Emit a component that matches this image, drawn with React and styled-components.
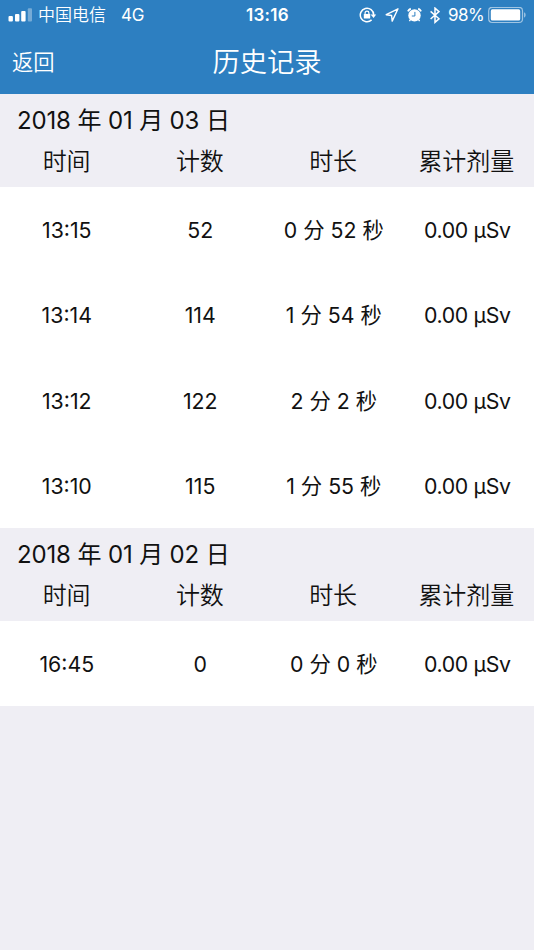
import React from "react";
import styled, { createGlobalStyle } from "styled-components";

const COLUMNS = ["时间", "计数", "时长", "累计剂量"];

const SECTIONS = [
  {
    date: "2018 年 01 月 03 日",
    records: [
      { time: "13:15", count: 52, duration: "0 分 52 秒", dose: "0.00 μSv" },
      { time: "13:14", count: 114, duration: "1 分 54 秒", dose: "0.00 μSv" },
      { time: "13:12", count: 122, duration: "2 分 2 秒", dose: "0.00 μSv" },
      { time: "13:10", count: 115, duration: "1 分 55 秒", dose: "0.00 μSv" },
    ],
  },
  {
    date: "2018 年 01 月 02 日",
    records: [
      { time: "16:45", count: 0, duration: "0 分 0 秒", dose: "0.00 μSv" },
    ],
  },
];

const SignalIcon = () => (
  <svg width="24" height="16" viewBox="0 0 24 16" fill="#fff">
    <rect x="0.5" y="9" width="4.4" height="5.4" rx="1" />
    <rect x="7" y="7" width="4.4" height="7.4" rx="1" />
    <rect x="13.2" y="4" width="4.4" height="10.4" rx="1" />
    <rect x="19.8" y="1.2" width="4.2" height="13.2" rx="1" opacity="0.35" />
  </svg>
);

const LockIcon = () => (
  <svg width="18" height="16" viewBox="0 0 18 16" fill="none" stroke="#fff">
    <path d="M12.6 12.9A6.7 6.7 0 1 1 14.7 8" strokeWidth="1.5" />
    <path d="M11.6 7.6h5.6l-2.6 3.4z" fill="#fff" stroke="none" />
    <rect x="4.8" y="7" width="6.4" height="4.6" rx="0.6" fill="#fff" stroke="none" />
    <path d="M6.1 7.3V6A1.9 1.9 0 0 1 9.9 6v1.3" strokeWidth="1.2" />
  </svg>
);

const LocationIcon = () => (
  <svg width="14" height="16" viewBox="0 0 14 16" fill="none" stroke="#fff">
    <path
      d="M13 1.8 1.2 7.7l5.4.8.6 5.6z"
      strokeWidth="1.4"
      strokeLinejoin="round"
    />
  </svg>
);

const AlarmIcon = () => (
  <svg width="15" height="16" viewBox="0 0 15 16" fill="none" stroke="#fff">
    <circle cx="7.5" cy="8.4" r="6.2" fill="#fff" stroke="none" />
    <path d="M.9 4.3a6 6 0 0 1 2.9-2.7M14.1 4.3a6 6 0 0 0-2.9-2.7" strokeWidth="1.8" />
    <path d="m3.6 12.4-1.2 1.7M11.4 12.4l1.2 1.7" strokeWidth="1.4" />
    <path d="M7.9 4.9v4.1H4.8" stroke="#2d7fc1" strokeWidth="1" />
  </svg>
);

const BluetoothIcon = () => (
  <svg width="10" height="17" viewBox="0 0 10 17" fill="none" stroke="#fff">
    <path d="m.6 4.4 8.4 7.4-4 3.5V1.1l4 3.5L.6 12" strokeWidth="1.5" />
  </svg>
);

const BatteryIcon = () => (
  <svg width="38" height="17" viewBox="0 0 38 17" fill="none">
    <rect x="0.7" y="0.3" width="33.8" height="15.2" rx="3.5" stroke="#fff" strokeOpacity="0.55" strokeWidth="1.2" />
    <rect x="2.8" y="2.3" width="29.4" height="11.2" rx="1.6" fill="#fff" />
    <path d="M36 5.3c2.2.8 2.2 4.4 0 5.2z" fill="#fff" opacity="0.5" />
  </svg>
);

const App = () => {
  return (
    <Screen>
      <GlobalStyle />
      <Header>
        <StatusBar>
          <Carrier>
            <SignalIcon />
            <CarrierName>中国电信</CarrierName>
            <Network>4G</Network>
          </Carrier>
          <Clock>13:16</Clock>
          <Indicators>
            <LockIcon />
            <LocationIcon />
            <AlarmIcon />
            <BluetoothIcon />
            <BatteryLevel>98%</BatteryLevel>
            <BatteryIcon />
          </Indicators>
        </StatusBar>
        <NavBar>
          <BackButton>返回</BackButton>
          <Title>历史记录</Title>
        </NavBar>
      </Header>
      {SECTIONS.map((section) => (
        <Section key={section.date}>
          <SectionHeader>
            <SectionDate>{section.date}</SectionDate>
            <ColumnRow>
              {COLUMNS.map((column) => (
                <span key={column}>{column}</span>
              ))}
            </ColumnRow>
          </SectionHeader>
          {section.records.map((record) => (
            <RecordRow key={record.time}>
              <Cell>{record.time}</Cell>
              <Cell>{record.count}</Cell>
              <Cell>{record.duration}</Cell>
              <Cell $tight>{record.dose}</Cell>
            </RecordRow>
          ))}
        </Section>
      ))}
    </Screen>
  );
};

export default App;

const GlobalStyle = createGlobalStyle`
  * {
    box-sizing: border-box;
  }

  body {
    margin: 0;
    background: #efeef4;
  }
`;

const Screen = styled.div`
  width: 100%;
  min-height: 950px;
  background: #efeef4;
  color: #111;
  font-family: Inter, "Noto Sans CJK SC", sans-serif;
`;

const Header = styled.header`
  height: 94px;
  background: #2d7fc1;
  color: #fff;
`;

const StatusBar = styled.div`
  display: grid;
  grid-template-columns: 1fr auto 1fr;
  align-items: center;
  height: 30px;
  padding: 0 8px;
  font-size: 17px;
  line-height: 30px;
`;

const Carrier = styled.div`
  display: flex;
  align-items: center;
`;

const CarrierName = styled.span`
  margin-left: 6px;
  font-weight: 350;
`;

const Network = styled.span`
  margin-left: 15px;
  letter-spacing: -0.2px;
`;

const Clock = styled.span`
  padding-left: 1px;
  font-weight: 600;
  letter-spacing: 0.3px;
`;

const Indicators = styled.div`
  display: flex;
  align-items: center;
  justify-content: flex-end;
  gap: 8px;
`;

const BatteryLevel = styled.span`
  margin-right: -4px;
  letter-spacing: -0.6px;
`;

const NavBar = styled.nav`
  display: grid;
  grid-template-columns: 1fr auto 1fr;
  align-items: center;
  height: 64px;
  padding: 0 12px;
  font-weight: 350;
`;

const BackButton = styled.button`
  justify-self: start;
  padding: 0;
  border: none;
  background: none;
  color: inherit;
  font: inherit;
  font-size: 21.3px;
  line-height: 32px;
`;

const Title = styled.h1`
  margin: 0;
  padding-top: 2px;
  font-size: 27.3px;
  font-weight: inherit;
  line-height: 40px;
`;

const Section = styled.section``;

const SectionHeader = styled.div`
  height: 92.6px;
  padding-top: 7px;
  font-size: 24px;
`;

const SectionDate = styled.h2`
  margin: 0;
  padding-left: 17px;
  font-size: inherit;
  font-weight: 400;
  letter-spacing: -0.14px;
  line-height: 40px;
`;

const ColumnRow = styled.div`
  display: grid;
  grid-template-columns: repeat(4, 1fr);
  padding-right: 1px;
  font-weight: 350;
  line-height: 41px;
  text-align: center;
`;

const RecordRow = styled.div`
  display: grid;
  grid-template-columns: repeat(4, 1fr);
  align-items: center;
  height: 85.4px;
  padding-top: 1px;
  background: #fff;
`;

const Cell = styled.span`
  font-size: 21.3px;
  line-height: 32px;
  letter-spacing: ${({ $tight }) => ($tight ? "-0.35px" : "0")};
  text-align: center;
  white-space: nowrap;
`;
